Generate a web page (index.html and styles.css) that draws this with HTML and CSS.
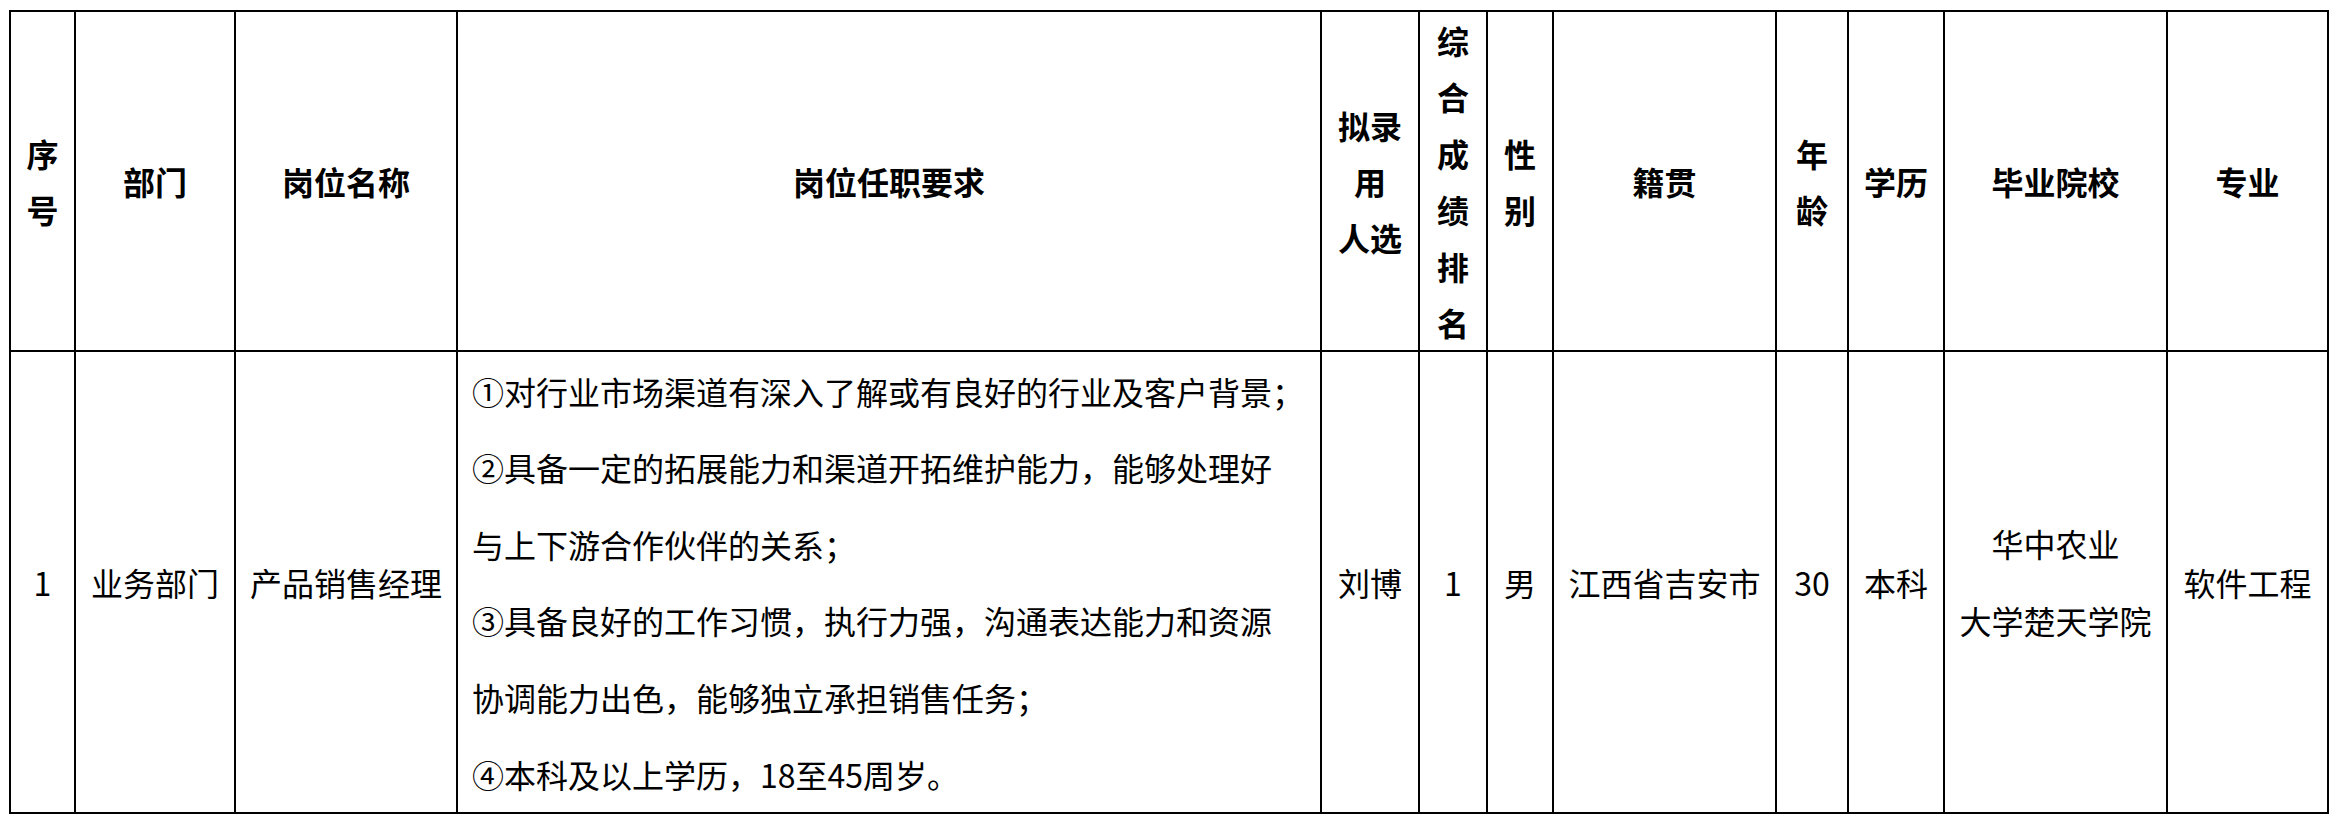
FILE: index.html
```html
<!DOCTYPE html>
<html lang="zh-CN">
<head>
<meta charset="utf-8">
<title>拟录用人员公示</title>
<link rel="stylesheet" href="styles.css">
</head>
<body>
<table class="grid">
  <colgroup>
    <col class="c-no">
    <col class="c-dept">
    <col class="c-post">
    <col class="c-req">
    <col class="c-name">
    <col class="c-rank">
    <col class="c-sex">
    <col class="c-home">
    <col class="c-age">
    <col class="c-edu">
    <col class="c-school">
    <col class="c-major">
  </colgroup>
  <thead>
    <tr class="head-row">
      <th>序<br>号</th>
      <th>部门</th>
      <th>岗位名称</th>
      <th>岗位任职要求</th>
      <th>拟录<br>用<br>人选</th>
      <th>综<br>合<br>成<br>绩<br>排<br>名</th>
      <th>性<br>别</th>
      <th>籍贯</th>
      <th>年<br>龄</th>
      <th>学历</th>
      <th>毕业院校</th>
      <th>专业</th>
    </tr>
  </thead>
  <tbody>
    <tr class="body-row">
      <td>1</td>
      <td>业务部门</td>
      <td>产品销售经理</td>
      <td class="req">
        <div class="req-line">①对行业市场渠道有深入了解或有良好的行业及客户背景；</div>
        <div class="req-line">②具备一定的拓展能力和渠道开拓维护能力，能够处理好</div>
        <div class="req-line">与上下游合作伙伴的关系；</div>
        <div class="req-line">③具备良好的工作习惯，执行力强，沟通表达能力和资源</div>
        <div class="req-line">协调能力出色，能够独立承担销售任务；</div>
        <div class="req-line">④本科及以上学历，18至45周岁。</div>
      </td>
      <td>刘博</td>
      <td>1</td>
      <td>男</td>
      <td>江西省吉安市</td>
      <td>30</td>
      <td>本科</td>
      <td>华中农业<br>大学楚天学院</td>
      <td>软件工程</td>
    </tr>
  </tbody>
</table>
</body>
</html>
```

FILE: styles.css
```css
html, body {
  margin: 0;
  padding: 0;
  background: #ffffff;
}

body {
  padding: 10px 0 0 9px;
  font-family: "Noto Sans CJK SC", "Microsoft YaHei", sans-serif;
  color: #000000;
}

.grid {
  border-collapse: collapse;
  table-layout: fixed;
  width: 2320px;
  font-size: 32px;
}

.grid th,
.grid td {
  border: 2px solid #000000;
  padding: 0;
  text-align: center;
  vertical-align: middle;
}

.c-no { width: 65px; }
.c-dept { width: 160px; }
.c-post { width: 222px; }
.c-req { width: 864px; }
.c-name { width: 98px; }
.c-rank { width: 68px; }
.c-sex { width: 66px; }
.c-home { width: 223px; }
.c-age { width: 72px; }
.c-edu { width: 96px; }
.c-school { width: 223px; }
.c-major { width: 161px; }

.head-row {
  height: 339px;
}

.head-row th {
  font-weight: 700;
  line-height: 56.4px;
}

.body-row {
  height: 462px;
}

.body-row td {
  font-weight: 400;
  line-height: 77px;
}

.grid td.req {
  text-align: left;
  padding: 0 12px 0 14px;
}

.req-line {
  white-space: nowrap;
  line-height: 76.6px;
}
```
